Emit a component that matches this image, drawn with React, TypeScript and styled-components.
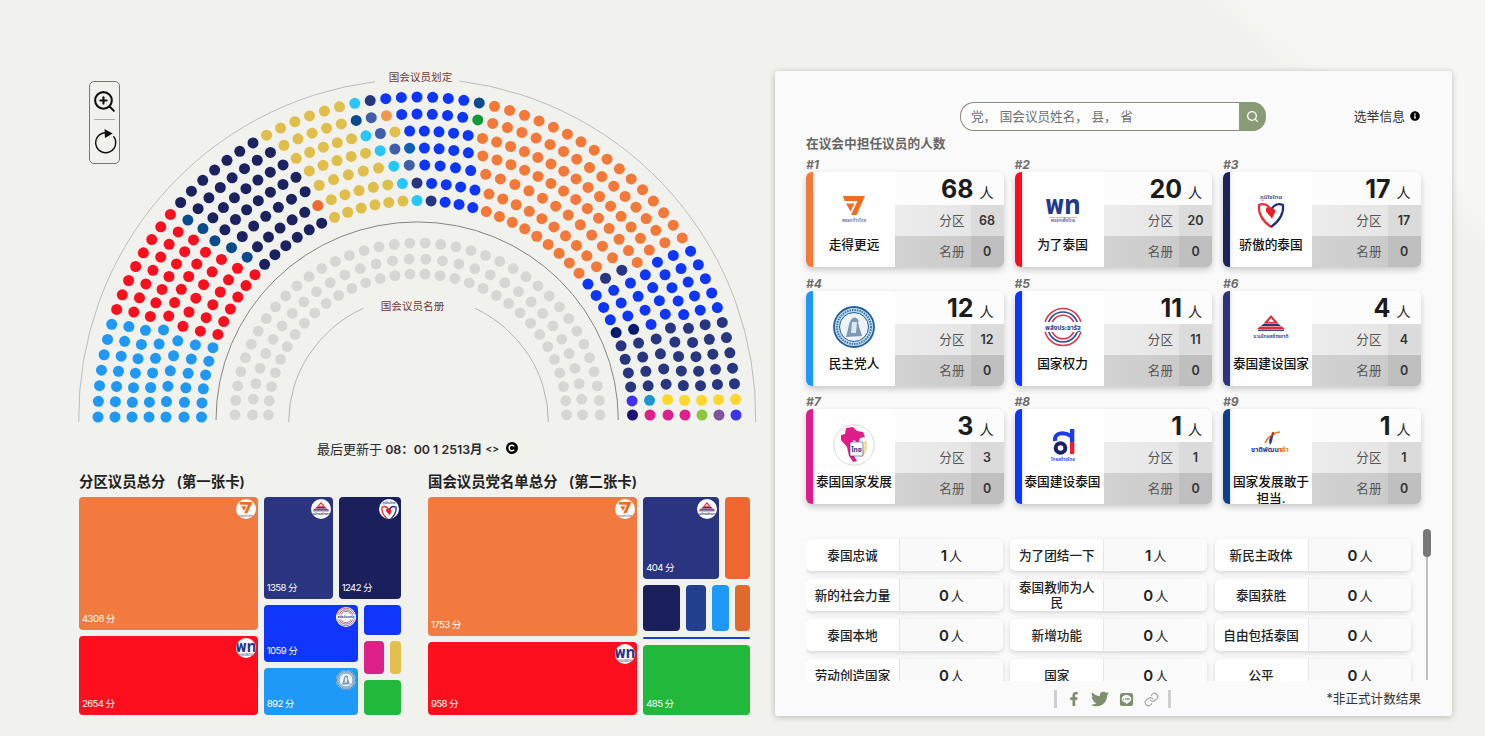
import React from 'react';
import styled, { createGlobalStyle } from 'styled-components';
import { ZoomIn, Search, Link as LinkIcon } from 'lucide-react';
import { FaFacebookF, FaTwitter, FaLine, FaInfoCircle } from 'react-icons/fa';

const O = '#f47837', R = '#fb0f1e', B = '#1f99f5', N = '#1b2260', G = '#e0be4a', C = '#27c6fb', D = '#283580';
const V = '#0d36fa', T = '#0c4a8e', S = '#3f5da8', F = '#f29650', DO = '#ee6a2e', Gr = '#0f9a36', DV = '#021a70';
const Y = '#fdd72b', P = '#e0208a', Pu = '#3d33ee', Tq = '#1e95d0', LG = '#8cc63f', Mv = '#7f559e', DP = '#1d0f76';

type Seg = [string, number];
const RINGS: { r: number; segs: Seg[] }[] = [
  { r: 319, segs: [[B,7],[R,8],[N,7],[G,6],[C,1],[D,1],[V,6],[T,1],[O,16],[V,5],[D,5],[Y,1],[Pu,1]] },
  { r: 302, segs: [[B,7],[R,7],[T,1],[N,7],[G,5],[T,1],[S,1],[F,1],[V,5],[Gr,1],[O,15],[V,5],[D,5],[Y,1],[Mv,1]] },
  { r: 285, segs: [[B,7],[R,7],[T,1],[N,7],[G,5],[C,1],[S,1],[G,1],[V,5],[O,15],[V,5],[D,5],[Y,1],[LG,1]] },
  { r: 268, segs: [[B,7],[R,6],[T,1],[N,7],[G,5],[C,1],[S,1],['#0f5fb5',1],[V,4],[O,14],[V,4],[D,5],[Y,1],[P,1]] },
  { r: 251, segs: [[B,6],[R,6],[T,1],[N,6],[G,5],[C,1],[S,1],[V,4],[O,11],[D,1],[V,4],[D,4],[Y,1],[P,1]] },
  { r: 233, segs: [[B,6],[R,6],[T,1],[N,5],[DO,1],[G,5],[C,1],[D,1],[V,4],[O,10],[D,1],[V,3],[DV,1],[D,4],[Tq,1],[P,1]] },
  { r: 215.5, segs: [[B,6],[R,6],[N,6],[G,6],[C,1],[D,1],[V,3],[O,9],[V,4],[DV,1],[D,4],[Pu,1],[DP,1]] },
];

const CX = 417;
const CY = 416;
const seats = RINGS.flatMap(({ r, segs }) => {
  const colors = segs.flatMap(([c, n]) => Array<string>(n).fill(c));
  return colors.map((c, i) => {
    const a = (Math.PI * i) / (colors.length - 1);
    return { x: CX - r * Math.cos(a), y: CY - r * Math.sin(a) + Math.cos(a), c };
  });
});
const listSeats = [
  { rx: 182.5, ry: 172, n: 38 },
  { rx: 165, ry: 156, n: 32 },
  { rx: 149, ry: 141, n: 32 },
].flatMap(({ rx, ry, n }) =>
  Array.from({ length: n }, (_, i) => {
    const a = (Math.PI * i) / (n - 1);
    return { x: 417.5 - rx * Math.cos(a), y: 415 - ry * Math.sin(a) };
  })
);

const GlobalStyle = createGlobalStyle`
  html, body { margin: 0; padding: 0; height: 100%; }
  body {
    overflow: hidden;
    font-family: Inter, "Noto Sans CJK SC", "Noto Sans", sans-serif;
    color: #222;
    background: linear-gradient(222deg, #f7f7f5 0, #f7f7f5 150px, #f1f1ee 190px);
  }
`;

const Page = styled.div`
  display: flex;
  width: 1485px;
  height: 736px;
  overflow: hidden;
`;
const Left = styled.section`
  position: relative;
  flex: 0 0 775px;
  padding-top: 60px;
  box-sizing: border-box;
`;
const ChartSvg = styled.svg`
  display: block;
  width: 775px;
  height: 370px;
`;
const ChartLabel = styled.text`
  font-size: 10.6px;
  fill: #6d3a30;
  text-anchor: middle;
  font-family: Inter, "Noto Sans CJK SC", sans-serif;
`;
const ZoomBox = styled.div`
  position: absolute;
  left: 89px;
  top: 81px;
  width: 29px;
  height: 74px;
  padding-top: 7px;
  border: 1px solid #777;
  border-radius: 5px;
  display: flex;
  flex-direction: column;
  align-items: center;
`;
const ZoomRule = styled.div`
  flex: 0 0 1px;
  width: 21px;
  background: #aaa;
  margin: 5px 0 7px;
`;
const UpdateRow = styled.div`
  display: flex;
  align-items: center;
  justify-content: center;
  height: 36px;
  padding: 0 19px 0 79px;
  font-size: 13px;
  color: #2a2a2a;
`;
const UpdateTime = styled.b`
  font-size: 12.4px;
  font-weight: 600;
`;
const Angle = styled.span`
  font-size: 10px;
  font-weight: 600;
  margin: 0 7px 0 3px;
`;
const Maps = styled.div`
  display: flex;
  gap: 27px;
  padding: 6px 0 0 79px;
`;
const MapCol = styled.div`
  width: 322px;
`;
const MapTitle = styled.h3`
  margin: 0;
  font-size: 14.4px;
  line-height: 20px;
  height: 25px;
  font-weight: 600;
  color: #222;
  white-space: pre;
  word-spacing: 2px;
`;
const Flex = styled.div<{ $dir?: 'row' | 'column'; $grow: number }>`
  display: flex;
  flex-direction: ${(p) => p.$dir ?? 'row'};
  flex: ${(p) => p.$grow} ${(p) => p.$grow} 0;
  gap: 6px;
  min-width: 0;
  min-height: 0;
`;
const TreeMap = styled.div`
  display: flex;
  gap: 6px;
  height: 218px;
`;
const Tile = styled.div<{ $bg: string; $grow: number }>`
  position: relative;
  flex: ${(p) => p.$grow} ${(p) => p.$grow} 0;
  min-width: 0;
  min-height: 0;
  background: ${(p) => p.$bg};
  border-radius: 4px;
  display: flex;
  align-items: flex-end;
  overflow: hidden;
`;
const Score = styled.span`
  margin: 0 0 5px 3px;
  font-size: 9.6px;
  line-height: 12px;
  letter-spacing: -0.6px;
  color: #fff;
  white-space: nowrap;
`;
const Badge = styled.div`
  position: absolute;
  top: 2px;
  right: 2px;
  width: 20px;
  height: 20px;
  border-radius: 50%;
  background: #fff;
  overflow: hidden;
`;
const BadgeArt = styled.div<{ $scale: number }>`
  width: 100%;
  height: 100%;
  transform: scale(${(p) => p.$scale});
`;
const ThinLine = styled.div`
  flex: 0 0 1.6px;
  background: #1c3fd8;
  border-radius: 1px;
`;

const Panel = styled.section`
  position: relative;
  margin: 71px 0 20px 0;
  width: 677px;
  height: 645px;
  box-sizing: border-box;
  padding: 31px 31px 0;
  background: #fafafa;
  border-radius: 3px;
  box-shadow: 0 1px 6px rgba(0, 0, 0, 0.25);
  display: flex;
  flex-direction: column;
`;
const Header = styled.div`
  display: flex;
  align-items: center;
  height: 29px;
`;
const SearchBox = styled.div`
  margin-left: 154px;
  width: 306px;
  height: 29px;
  display: flex;
  box-sizing: border-box;
  border: 1px solid #8a8a7c;
  border-right: 0;
  border-radius: 14px;
  background: #fdfdfd;
`;
const SearchText = styled.div`
  flex: 1;
  padding-left: 10px;
  font-size: 12.6px;
  line-height: 27px;
  color: #6f6f6f;
  text-spacing-trim: space-all;
`;
const SearchButton = styled.div`
  width: 27px;
  margin: -1px 0;
  background: #8a9a77;
  border-radius: 0 14px 14px 0;
  display: flex;
  align-items: center;
  justify-content: center;
  color: #fff;
`;
const InfoLink = styled.div`
  margin-left: auto;
  margin-top: -2px;
  padding-right: 1px;
  display: flex;
  align-items: center;
  gap: 5px;
  font-size: 12.8px;
  color: #333;
`;
const SectionTitle = styled.div`
  margin-top: 6px;
  height: 14px;
  font-size: 12.7px;
  line-height: 14px;
  font-weight: 600;
  color: #666;
`;
const CardGrid = styled.div`
  margin-top: 7px;
  display: grid;
  grid-template-columns: repeat(3, 197.5px);
  column-gap: 11px;
  row-gap: 9.7px;
`;
const Rank = styled.div`
  height: 14px;
  font-size: 12px;
  line-height: 14px;
  font-style: italic;
  font-weight: 700;
  color: #6c6c6c;
`;
const Card = styled.div<{ $accent: string }>`
  display: flex;
  height: 95px;
  border-radius: 6px;
  overflow: hidden;
  border-left: 7.5px solid ${(p) => p.$accent};
  box-sizing: border-box;
  box-shadow: 0 3px 6px rgba(0, 0, 0, 0.2);
`;
const Brand = styled.div`
  flex: 0 0 82px;
  background: #fff;
  box-shadow: inset 5px 0 4px -4px rgba(0, 0, 0, 0.12);
  display: flex;
  flex-direction: column;
  align-items: center;
  padding-top: 14px;
  box-sizing: border-box;
  overflow: hidden;
`;
const LogoSlot = styled.div`
  flex: 0 0 44px;
  width: 44px;
  height: 44px;
`;
const PartyName = styled.div`
  margin-top: 6px;
  width: 78px;
  font-size: 12.7px;
  line-height: 17px;
  text-align: center;
  color: #111;
  font-weight: 500;
`;
const Stats = styled.div`
  flex: 1;
  display: flex;
  flex-direction: column;
`;
const Total = styled.div`
  flex: 0 0 33px;
  height: 33px;
  min-height: 0;
  overflow: hidden;
  display: flex;
  justify-content: flex-end;
  align-items: baseline;
  gap: 6px;
  padding-right: 10px;
  background: #fcfcfc;
  box-sizing: border-box;
`;
const Big = styled.span`
  font-size: 25px;
  line-height: 35px;
  font-weight: 700;
  color: #1c1c1c;
`;
const PersonUnit = styled.span`
  font-size: 14px;
  line-height: 20px;
  color: #222;
`;
const SplitRow = styled.div<{ $tone: 'light' | 'dark' }>`
  flex: 0 0 31px;
  display: flex;
  background: ${(p) =>
    p.$tone === 'light'
      ? 'linear-gradient(90deg, #ececec, #e3e3e3)'
      : 'linear-gradient(90deg, #d2d2d2, #c8c8c8)'};
`;
const SplitLabel = styled.div`
  flex: 1;
  font-size: 12.6px;
  line-height: 31px;
  text-align: right;
  padding-right: 6px;
  color: #555;
`;
const SplitValue = styled.div<{ $tone: 'light' | 'dark' }>`
  flex: 0 0 33px;
  font-size: 12.5px;
  font-weight: 600;
  line-height: 31px;
  text-align: center;
  color: #333;
  background: ${(p) => (p.$tone === 'light' ? '#dbdbdb' : '#bfbfbf')};
`;
const ListScroller = styled.div`
  position: relative;
  margin-top: 25px;
  height: 151.7px;
  padding-top: 10px;
  box-sizing: border-box;
  overflow: hidden;
`;
const ListGrid = styled.div`
  display: grid;
  grid-template-columns: repeat(3, 196.8px);
  column-gap: 7.5px;
  row-gap: 8px;
`;
const ListRow = styled.div`
  display: flex;
  height: 32px;
  border-radius: 6px;
  overflow: hidden;
  background: linear-gradient(90deg, #f6f6f6, #fbfbfb);
  box-shadow: 0 2px 5px rgba(0, 0, 0, 0.15);
`;
const ListName = styled.div`
  flex: 0 0 94px;
  padding: 0 6px;
  box-sizing: border-box;
  background: #fff;
  border-right: 1.5px solid #e6e6e6;
  display: flex;
  align-items: center;
  justify-content: center;
  text-align: center;
  font-size: 12.6px;
  line-height: 15px;
  color: #222;
  font-weight: 500;
`;
const ListValue = styled.div`
  flex: 1;
  display: flex;
  align-items: center;
  justify-content: center;
  gap: 2px;
  font-size: 13px;
  color: #222;
`;
const ListCount = styled.b`
  font-size: 15px;
  font-weight: 600;
`;
const ScrollBar = styled.div`
  position: absolute;
  left: 651px;
  top: 458px;
  width: 2px;
  height: 151px;
  background: #bdbdbd;
`;
const ScrollThumb = styled.div`
  width: 8px;
  margin-left: -3px;
  height: 28px;
  background: #777;
  border-radius: 4px;
`;
const Footer = styled.div`
  position: relative;
  display: flex;
  justify-content: center;
  align-items: center;
  margin-top: 9px;
  height: 18px;
  padding-right: 3px;
`;
const Shares = styled.div`
  display: flex;
  align-items: center;
  gap: 10px;
  height: 18px;
  padding: 0 9px 0 10px;
  border-left: 3px solid #cfcfcf;
  border-right: 3px solid #cfcfcf;
  color: #7f8e6e;
`;
const Disclaimer = styled.div`
  position: absolute;
  right: 0;
  top: 0;
  font-size: 12.6px;
  line-height: 18px;
  color: #333;
`;

const LOGO_TEXT = { fontFamily: '"Noto Sans Thai", "Noto Sans", "DejaVu Sans", sans-serif' };

function Logo({ kind }: { kind: string }) {
  const content: Record<string, React.ReactNode> = {
    move: (
      <>
        <polygon points="11,10 33,10 24.5,29 19,29 25.5,15 12.5,15" fill="#f26c22" />
        <polygon points="14,17.5 22.5,17.5 18.5,25.5" fill="#f26c22" />
        <text x="22" y="36" fontSize="4.6" textAnchor="middle" fill="#35477e" style={LOGO_TEXT}>พรรคก้าวไกล</text>
      </>
    ),
    ptp: (
      <>
        <text x="22" y="28" fontSize="26" fontWeight="700" textAnchor="middle" fill="#24388c" style={LOGO_TEXT}>พท</text>
        <rect x="8" y="31" width="28" height="1" fill="#c0392b" opacity="0.4" />
        <text x="22" y="36" fontSize="4.6" textAnchor="middle" fill="#24388c" style={LOGO_TEXT}>พรรคเพื่อไทย</text>
      </>
    ),
    bjt: (
      <>
        <text x="22" y="13" fontSize="6" fontWeight="600" textAnchor="middle" fill="#2d4c94" style={LOGO_TEXT}>ภูมิใจไทย</text>
        <path d="M22 24 C19 18 14 17 10 19 C9 28 15 36 22 41" fill="none" stroke="#e2303a" strokeWidth="2.2" />
        <path d="M22 24 C25 18 30 17 34 19 C35 28 29 36 22 41" fill="none" stroke="#1f2f7e" strokeWidth="2.2" />
        <path d="M22 22 C20 20 16 21 17 25 C18 28 21 29 23 33 C24 29 27 27 26 24 C25 22 23 23 22 22Z" fill="#e8202c" />
      </>
    ),
    dem: (
      <>
        <circle cx="22" cy="22" r="20" fill="#c4d8ea" stroke="#1f5f9e" strokeWidth="1.8" />
        <circle cx="22" cy="22" r="17" fill="none" stroke="#2f74b3" strokeWidth="1.8" strokeDasharray="1.5 1" />
        <circle cx="22" cy="22" r="14.5" fill="#eef4f9" stroke="#1f5f9e" strokeWidth="1" />
        <path d="M14 32 L16.5 22 Q18 12.5 23 12.5 Q28 14 26 18 L30 31 Z" fill="#7d97b5" />
        <path d="M20 17 L25 17 L24 28 L19 28 Z" fill="#dbe7f2" />
      </>
    ),
    pprp: (
      <>
        <circle cx="22" cy="22" r="18.5" fill="none" stroke="#d8384a" strokeWidth="1.6" />
        <circle cx="22" cy="22" r="15" fill="none" stroke="#2d4b97" strokeWidth="1.6" />
        <circle cx="22" cy="22" r="11.8" fill="none" stroke="#d8384a" strokeWidth="1.6" />
        <rect x="1" y="17" width="42" height="10" fill="#fff" />
        <text x="22" y="25" fontSize="6.4" fontWeight="700" textAnchor="middle" fill="#27408b" style={LOGO_TEXT}>พลังประชารัฐ</text>
      </>
    ),
    utn: (
      <>
        <polygon points="22,10 29,18 15,18" fill="#d92f3d" />
        <polygon points="22,13 25,17 19,17" fill="#fff" />
        <polygon points="12,21 32,21 29,18.5 15,18.5" fill="#2b3480" />
        <polygon points="8,24 36,24 33,21.5 11,21.5" fill="#d92f3d" />
        <rect x="9" y="24.5" width="26" height="1.4" fill="#2b3480" />
        <text x="22" y="32.5" fontSize="5" fontWeight="600" textAnchor="middle" fill="#2b3480" style={LOGO_TEXT}>รวมไทยสร้างชาติ</text>
      </>
    ),
    ctp: (
      <>
        <circle cx="22" cy="22" r="20.2" fill="#fff" stroke="#c9c9c9" strokeWidth="0.7" />
        <path d="M28 33 A12 12 0 0 0 33 18" fill="none" stroke="#f0dfa0" strokeWidth="3" />
        <path d="M14 5 L21 4 L25 8 L31 9 L33 14 L28 15 L26 20 L22 17 L19 20 L18 27 L22 33 L25 38 L21 39 L17 33 L15 24 L9 17 L9 12 L13 11 Z" fill="#df1d8a" />
        <rect x="18" y="19" width="13" height="14" rx="1" fill="#fff" stroke="#2b3480" strokeWidth="0.6" />
        <text x="24.5" y="29" fontSize="6.6" fontWeight="700" textAnchor="middle" fill="#2b3480" style={LOGO_TEXT}>ไทย</text>
      </>
    ),
    tst: (
      <>
        <path d="M14 18 C13 10 22 8 30 13" fill="none" stroke="#1a3cf0" strokeWidth="4" />
        <circle cx="19.5" cy="25" r="4.8" fill="none" stroke="#1a2266" strokeWidth="4" />
        <rect x="29" y="6" width="4.3" height="13" fill="#1a3cf0" />
        <rect x="29" y="19" width="4.3" height="12" fill="#ee1c2e" />
        <text x="22" y="37.5" fontSize="4.6" fontWeight="600" textAnchor="middle" fill="#1a3cf0" style={LOGO_TEXT}>ไทยสร้างไทย</text>
      </>
    ),
    cpk: (
      <>
        <path d="M16 20 C20 12 27 9 31 9" fill="none" stroke="#f07b1c" strokeWidth="1.6" />
        <path d="M21 22 C18 15 24 11 25 11 C23 15 24 19 21 22Z" fill="#25418f" />
        <circle cx="24" cy="10.5" r="1.4" fill="#e8202c" />
        <text x="17.5" y="29" fontSize="7" fontWeight="700" textAnchor="middle" fill="#25418f" style={LOGO_TEXT}>ชาติพัฒนา</text>
        <text x="34" y="29" fontSize="7" fontWeight="700" textAnchor="middle" fill="#f07b1c" style={LOGO_TEXT}>กล้า</text>
      </>
    ),
  };
  return (
    <svg viewBox="0 0 44 44" width="100%" height="100%" style={{ display: 'block' }}>
      {content[kind]}
    </svg>
  );
}

const CARDS = [
  { name: '走得更远', total: 68, seat: 68, color: '#f47a3c', logo: 'move' },
  { name: '为了泰国', total: 20, seat: 20, color: '#fb0f1e', logo: 'ptp' },
  { name: '骄傲的泰国', total: 17, seat: 17, color: '#1b2260', logo: 'bjt' },
  { name: '民主党人', total: 12, seat: 12, color: '#1f99f5', logo: 'dem' },
  { name: '国家权力', total: 11, seat: 11, color: '#0f36fa', logo: 'pprp' },
  { name: '泰国建设国家', total: 4, seat: 4, color: '#2b3480', logo: 'utn' },
  { name: '泰国国家发展', total: 3, seat: 3, color: '#df1d8a', logo: 'ctp' },
  { name: '泰国建设泰国', total: 1, seat: 1, color: '#0f36fa', logo: 'tst' },
  { name: '国家发展敢于担当.', total: 1, seat: 1, color: '#0c3f8a', logo: 'cpk' },
];

const LIST: [string, number][] = [
  ['泰国忠诚', 1], ['为了团结一下', 1], ['新民主政体', 0],
  ['新的社会力量', 0], ['泰国教师为人民', 0], ['泰国获胜', 0],
  ['泰国本地', 0], ['新增功能', 0], ['自由包括泰国', 0],
  ['劳动创造国家', 0], ['国家', 0], ['公平', 0],
];

function ScoreTile({ bg, grow, score, logo }: { bg: string; grow: number; score?: string; logo?: string }) {
  return (
    <Tile $bg={bg} $grow={grow}>
      {score && <Score>{score} 分</Score>}
      {logo && (
        <Badge>
          <BadgeArt $scale={logo === 'dem' || logo === 'pprp' ? 1.05 : 1.3}>
            <Logo kind={logo} />
          </BadgeArt>
        </Badge>
      )}
    </Tile>
  );
}

export default function App() {
  return (
    <>
      <GlobalStyle />
      <Page>
        <Left>
          <ChartSvg viewBox="0 60 775 370">
            <g fill="none" strokeWidth="1">
              <path d="M78.7 422 A338.5 338.5 0 0 1 375 81.7" stroke="#bdbdb8" />
              <path d="M459.3 81 A338.5 338.5 0 0 1 755.7 422" stroke="#bdbdb8" />
              <path d="M216 420 A201 198 0 0 1 618.3 420" stroke="#858580" />
              <path d="M288.7 422 A130 126 0 0 1 363.3 308.3" stroke="#b5b5b0" />
              <path d="M475 308.3 A130 126 0 0 1 548.3 422" stroke="#b5b5b0" />
            </g>
            <ChartLabel x="420.5" y="81">国会议员划定</ChartLabel>
            <ChartLabel x="412.5" y="310">国会议员名册</ChartLabel>
            {listSeats.map((s, i) => (
              <circle key={i} cx={s.x} cy={s.y} r="5.4" fill="#d6d6d5" />
            ))}
            {seats.map((s, i) => (
              <circle key={i} cx={s.x} cy={s.y} r="5.5" fill={s.c} />
            ))}
          </ChartSvg>
          <ZoomBox>
            <ZoomIn size={25} strokeWidth={2} color="#111" />
            <ZoomRule />
            <svg width="28" height="30" viewBox="0 0 28 30" fill="none">
              <path d="M22.4 9.3 A10 10 0 1 1 14.7 5.7" stroke="#111" strokeWidth="1.4" />
              <polygon points="13.5,2 21.7,6.5 14,11" fill="#111" />
            </svg>
          </ZoomBox>
          <UpdateRow>
            <span>最后更新于<UpdateTime> 08：00 1 2513月</UpdateTime></span>
            <Angle>&lt;&gt;</Angle>
            <svg width="12" height="12" viewBox="0 0 12 12">
              <circle cx="6" cy="6" r="6" fill="#000" />
              <path d="M8.2 4.4 A2.8 2.8 0 1 0 8.2 7.6" fill="none" stroke="#fff" strokeWidth="1.5" />
            </svg>
          </UpdateRow>
          <Maps>
            <MapCol>
              <MapTitle>分区议员总分  (第一张卡)</MapTitle>
              <TreeMap>
                <Flex $dir="column" $grow={178.7}>
                  <ScoreTile bg="#f27a3e" grow={133} score="4306" logo="move" />
                  <ScoreTile bg="#ff0e1e" grow={79.7} score="2654" logo="ptp" />
                </Flex>
                <Flex $dir="column" $grow={137.3}>
                  <Flex $grow={102}>
                    <ScoreTile bg="#2b3480" grow={69} score="1358" logo="utn" />
                    <ScoreTile bg="#1b205c" grow={62.3} score="1242" logo="bjt" />
                  </Flex>
                  <Flex $grow={110.3}>
                    <Flex $dir="column" $grow={94}>
                      <ScoreTile bg="#0f36fa" grow={57.6} score="1059" logo="pprp" />
                      <ScoreTile bg="#1f99f8" grow={47} score="892" logo="dem" />
                    </Flex>
                    <Flex $dir="column" $grow={37.5}>
                      <ScoreTile bg="#0f36fa" grow={30} />
                      <Flex $grow={33.3}>
                        <ScoreTile bg="#dd1f88" grow={21.2} />
                        <ScoreTile bg="#e0c150" grow={10.7} />
                      </Flex>
                      <ScoreTile bg="#21b83c" grow={35} />
                    </Flex>
                  </Flex>
                </Flex>
              </TreeMap>
            </MapCol>
            <MapCol>
              <MapTitle>国会议员党名单总分  (第二张卡)</MapTitle>
              <TreeMap>
                <Flex $dir="column" $grow={209}>
                  <ScoreTile bg="#f27a3e" grow={139.3} score="1753" logo="move" />
                  <ScoreTile bg="#ff0e1e" grow={73.3} score="958" logo="ptp" />
                </Flex>
                <Flex $dir="column" $grow={106.7}>
                  <Flex $grow={82}>
                    <ScoreTile bg="#2b3480" grow={76} score="404" logo="utn" />
                    <ScoreTile bg="#ef662e" grow={24.7} />
                  </Flex>
                  <Flex $grow={46.3}>
                    <ScoreTile bg="#1b205c" grow={37} />
                    <ScoreTile bg="#233f90" grow={19.4} />
                    <ScoreTile bg="#1f99f8" grow={17.3} />
                    <ScoreTile bg="#e06a2c" grow={14.7} />
                  </Flex>
                  <ThinLine />
                  <ScoreTile bg="#21b83c" grow={70.7} score="485" />
                </Flex>
              </TreeMap>
            </MapCol>
          </Maps>
        </Left>
        <Panel>
          <Header>
            <SearchBox>
              <SearchText>党， 国会议员姓名， 县， 省</SearchText>
              <SearchButton>
                <Search size={13} strokeWidth={2.4} />
              </SearchButton>
            </SearchBox>
            <InfoLink>
              选举信息
              <FaInfoCircle size={10} color="#000" />
            </InfoLink>
          </Header>
          <SectionTitle>在议会中担任议员的人数</SectionTitle>
          <CardGrid>
            {CARDS.map((c, i) => (
              <div key={c.name}>
                <Rank>#{i + 1}</Rank>
                <Card $accent={c.color}>
                  <Brand>
                    <LogoSlot>
                      <Logo kind={c.logo} />
                    </LogoSlot>
                    <PartyName>{c.name}</PartyName>
                  </Brand>
                  <Stats>
                    <Total>
                      <Big>{c.total}</Big>
                      <PersonUnit>人</PersonUnit>
                    </Total>
                    <SplitRow $tone="light">
                      <SplitLabel>分区</SplitLabel>
                      <SplitValue $tone="light">{c.seat}</SplitValue>
                    </SplitRow>
                    <SplitRow $tone="dark">
                      <SplitLabel>名册</SplitLabel>
                      <SplitValue $tone="dark">0</SplitValue>
                    </SplitRow>
                  </Stats>
                </Card>
              </div>
            ))}
          </CardGrid>
          <ListScroller>
            <ListGrid>
              {LIST.map(([name, n]) => (
                <ListRow key={name}>
                  <ListName>{name}</ListName>
                  <ListValue>
                    <ListCount>{n}</ListCount>人
                  </ListValue>
                </ListRow>
              ))}
            </ListGrid>
          </ListScroller>
          <ScrollBar>
            <ScrollThumb />
          </ScrollBar>
          <Footer>
            <Shares>
              <FaFacebookF size={14} />
              <FaTwitter size={18} />
              <FaLine size={15} />
              <LinkIcon size={15} color="#aaa" />
            </Shares>
            <Disclaimer>*非正式计数结果</Disclaimer>
          </Footer>
        </Panel>
      </Page>
    </>
  );
}
